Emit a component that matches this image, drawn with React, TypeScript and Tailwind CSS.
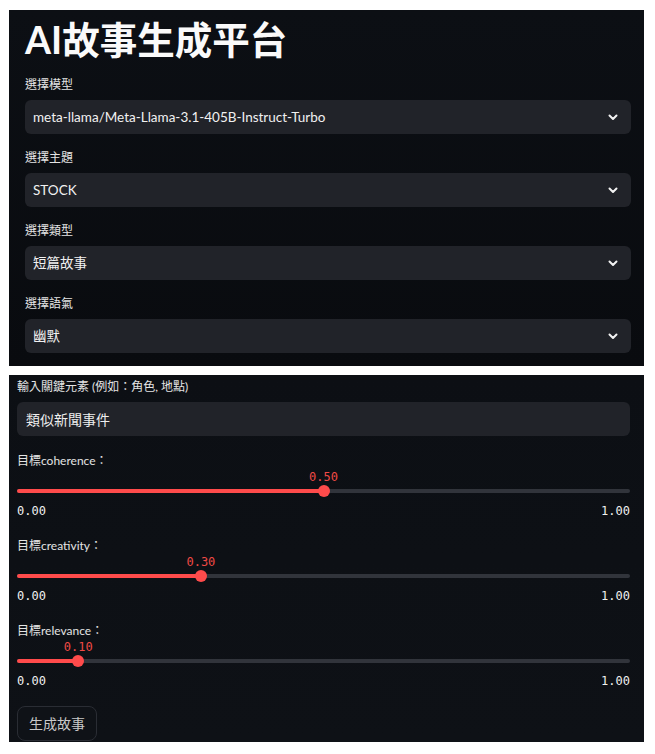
import React from "react";

// ---------- Data ----------
const SELECTS: Array<{ label: string; value: string }> = [
  { label: "選擇模型", value: "meta-llama/Meta-Llama-3.1-405B-Instruct-Turbo" },
  { label: "選擇主題", value: "STOCK" },
  { label: "選擇類型", value: "短篇故事" },
  { label: "選擇語氣", value: "幽默" },
];

const SLIDERS: Array<{ label: string; value: number }> = [
  { label: "目標coherence：", value: 0.5 },
  { label: "目標creativity：", value: 0.3 },
  { label: "目標relevance：", value: 0.1 },
];

const SANS = "font-['Lato','Noto_Sans_CJK_TC',sans-serif]";
const MONO = "font-['DejaVu_Sans_Mono','Liberation_Mono',monospace]";

// ---------- Pieces ----------
function Chevron() {
  return (
    <svg width="10" height="7" viewBox="0 0 10 7" fill="none">
      <path d="M1.5 1.5 L5 5 L8.5 1.5" stroke="#f2f2f2" strokeWidth="2" strokeLinecap="round" strokeLinejoin="round" />
    </svg>
  );
}

function SelectField({ label, value }: { label: string; value: string }) {
  return (
    <div className="flex flex-col">
      <div className="h-[20px] leading-[20px] text-[12px] text-[#e4e4e4]">{label}</div>
      <div className="mt-[5px] h-[34px] rounded-md bg-[#212329] flex items-center justify-between pl-[8px] pr-[13px]">
        <span className="text-[13.5px] text-[#f1f1f1] truncate">{value}</span>
        <Chevron />
      </div>
    </div>
  );
}

function Slider({ label, value }: { label: string; value: number }) {
  const pct = `${value * 100}%`;
  return (
    <div className="flex flex-col h-[72px]">
      <div className="h-[20px] leading-[20px] text-[12px] text-[#e4e4e4]">{label}</div>
      <div className="relative h-[12px]">
        <span
          className={`absolute top-0 -translate-x-1/2 leading-[12px] text-[12px] text-[#f04a45] ${MONO}`}
          style={{ left: pct }}
        >
          {value.toFixed(2)}
        </span>
      </div>
      <div className="relative h-[16px] flex items-center">
        <div className="w-full h-[4px] rounded-full bg-[#31343b]" />
        <div className="absolute left-0 h-[4px] rounded-full bg-[#ff4b4b]" style={{ width: pct }} />
        <div
          className="absolute w-[12px] h-[12px] rounded-full bg-[#ff4b4b] -translate-x-1/2"
          style={{ left: pct }}
        />
      </div>
      <div className={`h-[24px] flex items-center justify-between text-[12px] text-[#f0f0f0] ${MONO}`}>
        <span>0.00</span>
        <span>1.00</span>
      </div>
    </div>
  );
}

// ---------- Component ----------
export default function App() {
  return (
    <div className={`w-[655px] h-[754px] bg-white pt-[10px] pl-[9px] ${SANS}`}>
      <section className="w-[635px] h-[356px] bg-gradient-to-b from-[#0c0f14] to-[#090b0f] pt-[5px] pl-[16px] pr-[13px]">
        <h1 className="h-[50px] leading-[50px] text-[37.5px] font-bold text-[#fafafa]">
          AI故事生成平台
        </h1>
        <div className="mt-[10px] flex flex-col gap-[14px]">
          {SELECTS.map((s) => (
            <SelectField key={s.label} label={s.label} value={s.value} />
          ))}
        </div>
      </section>

      <section className="mt-[9px] w-[635px] h-[367px] bg-gradient-to-b from-[#0c0f14] to-[#0e1116] pt-[2px] pl-[8px] pr-[14px]">
        <div className="h-[20px] leading-[20px] text-[12px] text-[#e4e4e4]">輸入關鍵元素 (例如：角色, 地點)</div>
        <div className="mt-[5px] h-[34px] rounded-md bg-[#212329] flex items-center pl-[9px]">
          <span className="text-[14px] text-[#eeeeee]">類似新聞事件</span>
        </div>
        <div className="mt-[15px] flex flex-col gap-[13px]">
          {SLIDERS.map((s) => (
            <Slider key={s.label} label={s.label} value={s.value} />
          ))}
        </div>
        <button
          type="button"
          className="mt-[13px] h-[35px] px-[11px] rounded-lg border border-[#2a2d34] bg-[#0f1217] text-[14px] text-[#c9c9c9]"
        >
          生成故事
        </button>
      </section>
    </div>
  );
}
